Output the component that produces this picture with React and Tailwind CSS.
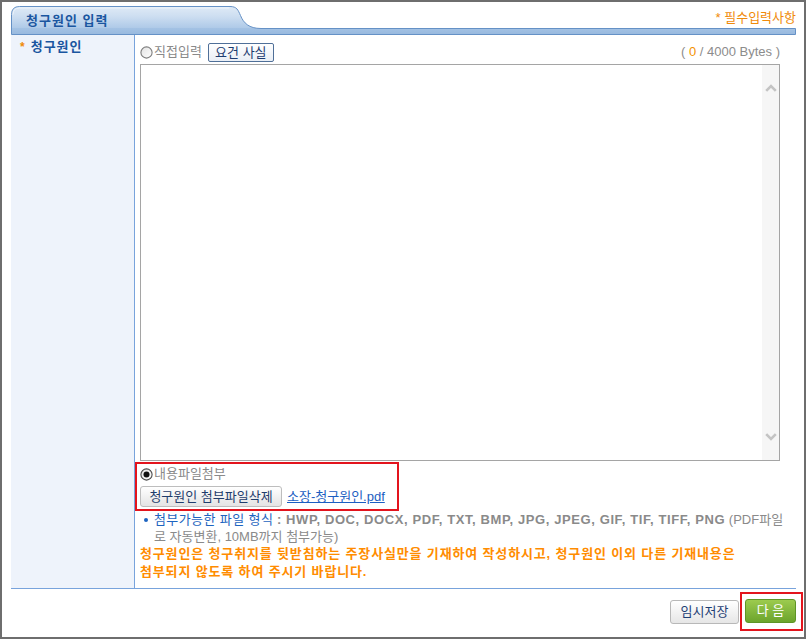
import React from "react";

function Radio({ checked }) {
  return (
    <svg width="13" height="13" viewBox="0 0 13 13" className="shrink-0">
      <defs>
        <linearGradient id={checked ? "rg1" : "rg2"} x1="0" y1="0" x2="1" y2="1">
          <stop offset="0" stopColor="#e2e2e2" />
          <stop offset="1" stopColor="#ffffff" />
        </linearGradient>
      </defs>
      <circle cx="6.5" cy="6.5" r="5.6" fill={`url(#${checked ? "rg1" : "rg2"})`} stroke={checked ? "#4a4a4a" : "#7e7e7e"} strokeWidth="1.1" />
      {checked && <circle cx="6.5" cy="6.5" r="3" fill="#111" />}
    </svg>
  );
}

function TabShape() {
  return (
    <svg className="absolute inset-0" width="785" height="29" viewBox="0 0 785 29">
      <defs>
        <linearGradient id="tabg" x1="0" y1="0" x2="0" y2="1">
          <stop offset="0" stopColor="#dfeaf6" />
          <stop offset="0.35" stopColor="#cddef1" />
          <stop offset="0.76" stopColor="#afcae8" />
          <stop offset="0.78" stopColor="#a3c2e4" />
          <stop offset="1" stopColor="#98b9de" />
        </linearGradient>
      </defs>
      <path
        d="M0.5,28.5 V8.5 Q0.5,0.5 8.5,0.5 H219 C226,0.5 227,4 229.5,9.5 C232.5,17 238,22.5 250,22.5 H784.5 V28.5 Z"
        fill="url(#tabg)"
        stroke="#6591c6"
        strokeWidth="1"
      />
      <path d="M2,8.5 Q2,2 8.5,2 H218" fill="none" stroke="#eef4fb" strokeWidth="1" />
    </svg>
  );
}

function Chevron({ up }) {
  return (
    <svg width="12" height="9" viewBox="0 0 12 9">
      <path
        d={up ? "M1.2,7.8 L6,3 L10.8,7.8" : "M1.2,1.2 L6,6 L10.8,1.2"}
        fill="none"
        stroke="#c4c4c4"
        strokeWidth="2.6"
      />
    </svg>
  );
}

export default function App() {
  return (
    <div className="flex h-[639px] w-[806px] flex-col border-2 border-[#6e6e6e] bg-white font-['Liberation_Sans','Noto_Sans_CJK_KR',sans-serif] text-[13px]">
      <div className="pl-[9px] pr-[8px] pt-[4px]">
        {/* Header */}
        <div className="relative flex h-[29px] items-start justify-between">
          <TabShape />
          <div className="relative pl-[15px] pt-[7px] text-[13px] font-bold leading-[16px] tracking-[1px] text-[#1a56a0]">
            청구원인 입력
          </div>
          <div className="relative pt-[5px] text-[13px] leading-[14px] text-[#f08a0a]">
            * 필수입력사항
          </div>
        </div>

        {/* Row */}
        <div className="flex h-[554px] border-b border-[#78a3dc]">
          <div className="w-[124px] shrink-0 border-r border-[#78a3dc] bg-[#eef3fb] pl-[9px] pt-[4px]">
            <div className="flex items-center leading-[16px]">
              <span className="mr-[6px] text-[12px] font-bold text-[#f08a0a]">*</span>
              <span className="text-[13px] font-bold tracking-[1px] text-[#1a56a0]">청구원인</span>
            </div>
          </div>

          <div className="flex-1 pl-[5px]">
            {/* top row */}
            <div className="mt-[7px] flex h-[20px] w-[640px] items-center">
              <Radio />
              <span className="ml-[1px] leading-[14px] text-[#8a8a8a]">직접입력</span>
              <button className="ml-[6px] mt-[1px] flex h-[19px] w-[66px] items-center justify-center rounded-[2px] border border-[#4f6f98] bg-gradient-to-b from-white to-[#e9eef5] text-[13px] leading-[14px] text-[#1c3c70]">
                요건 사실
              </button>
              <span className="ml-auto leading-[14px] text-[#8c8c8c]">
                ( <span className="text-[#f39200]">0</span> / 4000 Bytes )
              </span>
            </div>

            {/* textarea */}
            <div className="mt-[2px] flex h-[397px] w-[640px] border border-[#a5a5a5] bg-white">
              <div className="flex-1" />
              <div className="flex w-[17px] flex-col items-center justify-between bg-[#f6f6f6] py-[18px]">
                <Chevron up />
                <Chevron />
              </div>
            </div>

            {/* red highlighted attach box */}
            <div className="-ml-[5px] mt-[1px] h-[49px] w-[264px] border-2 border-[#e3141d] pl-[3px] pt-[2px]">
              <div className="flex h-[16px] items-center">
                <Radio checked />
                <span className="ml-[1px] leading-[14px] text-[#8a8a8a]">내용파일첨부</span>
              </div>
              <div className="mt-[4px] flex items-center">
                <button className="flex h-[21px] w-[142px] items-center justify-center rounded-[3px] border border-[#bdbdbd] bg-gradient-to-b from-white to-[#e4e4e4] text-[13px] leading-[14px] text-[#1f3d6c]">
                  청구원인 첨부파일삭제
                </button>
                <a className="ml-[5px] leading-[14px] text-[#1b5ec2] underline">소장-청구원인.pdf</a>
              </div>
            </div>

            {/* format info */}
            <div className="flex items-start pl-[4px]">
              <span className="mr-[6px] mt-[7px] h-[4px] w-[4px] shrink-0 rounded-full bg-[#1d64c0]" />
              <div className="whitespace-nowrap text-[13px] leading-[17px] text-[#8a8a8a]">
                <span className="tracking-[0.4px] text-[#1d64c0]">첨부가능한 파일 형식</span>{" "}
                <span className="font-bold tracking-[0.6px]">: HWP, DOC, DOCX, PDF, TXT, BMP, JPG, JPEG, GIF, TIF, TIFF, PNG</span>{" "}
                (PDF파일
                <br />
                로 자동변환, 10MB까지 첨부가능)
              </div>
            </div>

            {/* warning */}
            <div className="whitespace-nowrap text-[13px] font-bold leading-[18px] tracking-[0.85px] text-[#ff8c00]">
              청구원인은 청구취지를 뒷받침하는 주장사실만을 기재하여 작성하시고, 청구원인 이외 다른 기재내용은
              <br />
              첨부되지 않도록 하여 주시기 바랍니다.
            </div>
          </div>
        </div>
      </div>

      {/* bottom buttons */}
      <div className="mt-[3px] flex items-start justify-end pr-[1px]">
        <button className="mr-[1px] mt-[8px] flex h-[24px] w-[69px] items-center justify-center rounded-[3px] border border-[#b8b8b8] bg-gradient-to-b from-white to-[#e6e6e6] text-[13px] leading-[14px] text-[#1e3f75]">
          임시저장
        </button>
        <div className="h-[39px] w-[63px] border-2 border-[#e3141d] pl-[3px] pt-[5px]">
          <button className="flex h-[24px] w-[51px] items-center justify-center rounded-[3px] border border-[#5e9426] bg-gradient-to-b from-[#9ccb4e] to-[#6ca42c] text-[13px] leading-[14px] text-white">
            다 음
          </button>
        </div>
      </div>
    </div>
  );
}
